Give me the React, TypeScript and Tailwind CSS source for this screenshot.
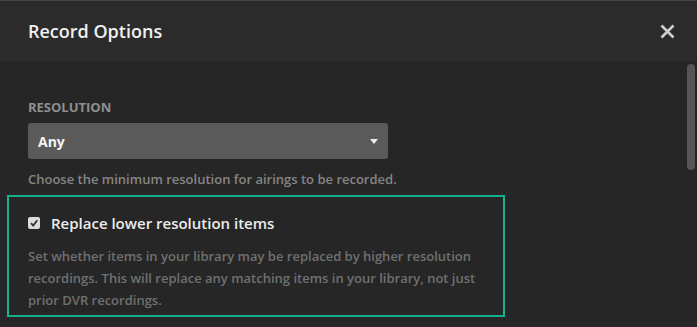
import React from "react";

export default function App() {
  return (
    <div
      className="relative w-[697px] h-[327px] overflow-hidden bg-[#262626]"
      style={{ fontFamily: '"Open Sans", "Noto Sans", sans-serif' }}
    >
      <div className="h-px bg-[#454545]" />
      <div className="flex items-center justify-between bg-[#2b2b2b] pl-[28px] pr-[22px] py-[18px]">
        <h1 className="text-[18px] leading-[24px] font-semibold text-[#f0f0f0]">Record Options</h1>
        <svg width="15" height="15" viewBox="0 0 15 15">
          <path d="M1.5 1.5 L13.5 13.5 M13.5 1.5 L1.5 13.5" stroke="#cfcfcf" strokeWidth="2.6" strokeLinecap="butt" />
        </svg>
      </div>
      <div className="px-[28px] pt-[37px]">
        <div className="text-[13px] leading-[18px] font-bold uppercase text-[#8f8f8f]">Resolution</div>
        <div className="mt-[7px] flex h-[36px] w-[360px] items-center justify-between rounded-[3px] bg-[#5a5a5a] pl-[10px] pr-[10px]">
          <span className="text-[14px] font-bold text-[#f5f5f5]">Any</span>
          <svg width="8" height="5" viewBox="0 0 8 5">
            <path d="M0 0 L8 0 L4 5 Z" fill="#eeeeee" />
          </svg>
        </div>
        <p className="mt-[11px] text-[13px] leading-[18px] font-semibold text-[#858585]">
          Choose the minimum resolution for airings to be recorded.
        </p>
        <div className="mt-[7px] -ml-[21px] w-[498px] border-2 border-[#14b08c] pl-[19px] pt-[16px] pb-[4px]">
          <div className="flex items-center">
            <span className="flex h-[12px] w-[12px] items-center justify-center rounded-[2px] bg-[#dcdcdc]">
              <svg width="10" height="10" viewBox="0 0 10 10">
                <path d="M2 5.2 L4.2 7.5 L8.3 2.2" stroke="#333" strokeWidth="1.8" fill="none" />
              </svg>
            </span>
            <span className="ml-[11px] text-[15px] leading-[20px] font-semibold text-[#ececec]">
              Replace lower resolution items
            </span>
          </div>
          <p className="mt-[12px] w-[452px] text-[13px] leading-[22px] font-semibold text-[#707070]">
            Set whether items in your library may be replaced by higher resolution recordings. This will replace any matching items in your library, not just prior DVR recordings.
          </p>
        </div>
      </div>
      <div className="absolute left-[687px] top-[64px] h-[106px] w-[8px] rounded-full bg-[#555555]" />
    </div>
  );
}
